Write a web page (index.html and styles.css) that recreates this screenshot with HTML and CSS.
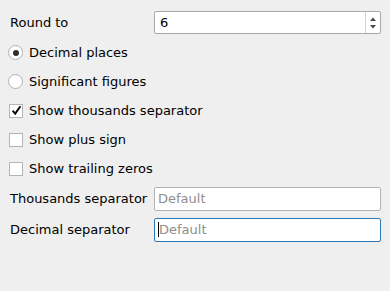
FILE: index.html
```html
<!DOCTYPE html>
<html>
<head>
<meta charset="utf-8">
<link rel="stylesheet" href="styles.css">
</head>
<body>
<div class="panel">
  <div class="row field-row first">
    <span class="label">Round to</span>
    <div class="spinbox">
      <span class="value">6</span>
      <div class="arrows">
        <svg width="14" height="22" viewBox="0 0 14 22">
          <path d="M4 9 L7 5.5 L10 9 Z" fill="#4a4a4a"/>
          <path d="M4 13 L7 16.5 L10 13 Z" fill="#4a4a4a"/>
        </svg>
      </div>
    </div>
  </div>
  <div class="row opt-row">
    <span class="radio checked"><span class="dot"></span></span>
    <span class="text">Decimal places</span>
  </div>
  <div class="row opt-row">
    <span class="radio"></span>
    <span class="text">Significant figures</span>
  </div>
  <div class="row opt-row">
    <span class="check">
      <svg width="11" height="11" viewBox="0 0 11 11"><path d="M1.6 5.6 L4.2 8.6 L9.4 1.2" fill="none" stroke="#000" stroke-width="1.9"/></svg>
    </span>
    <span class="text">Show thousands separator</span>
  </div>
  <div class="row opt-row">
    <span class="check"></span>
    <span class="text">Show plus sign</span>
  </div>
  <div class="row opt-row">
    <span class="check"></span>
    <span class="text">Show trailing zeros</span>
  </div>
  <div class="row field-row sep1">
    <span class="label">Thousands separator</span>
    <div class="lineedit"><span class="placeholder">Default</span></div>
  </div>
  <div class="row field-row sep2">
    <span class="label">Decimal separator</span>
    <div class="lineedit focused"><span class="caret"></span><span class="placeholder">Default</span></div>
  </div>
</div>
</body>
</html>
```
FILE: styles.css
```css
html, body {
  margin: 0;
  padding: 0;
  background: #efefef;
  width: 390px;
  height: 291px;
  overflow: hidden;
}
body {
  font-family: "DejaVu Sans", sans-serif;
  font-size: 13px;
  color: #000;
}
.panel {
  display: flex;
  flex-direction: column;
  padding: 11px 9px 0 0;
}
.row {
  display: flex;
  align-items: center;
}
.field-row {
  height: 23px;
}
.field-row .label {
  width: 144px;
  padding-left: 10px;
  flex: none;
}
.first {
  margin-bottom: 4px;
}
.spinbox {
  flex: 1;
  height: 21px;
  border: 1px solid #a9a9a9;
  border-radius: 2px;
  background: #fff;
  display: flex;
  align-items: center;
}
.spinbox .value {
  flex: 1;
  padding-left: 5px;
}
.arrows {
  width: 14px;
  height: 21px;
  border-left: 1px solid #d4d4d4;
  display: flex;
}
.opt-row {
  height: 29px;
  padding-left: 8px;
}
.opt-row .text {
  margin-left: 6px;
}
.radio {
  width: 13px;
  height: 13px;
  border: 1px solid #b0b0b0;
  border-radius: 50%;
  background: #fff;
  display: flex;
  align-items: center;
  justify-content: center;
  margin-left: 0;
  flex: none;
}
.radio .dot {
  width: 6px;
  height: 6px;
  border-radius: 50%;
  background: #2e2e2e;
}
.check {
  width: 12px;
  height: 12px;
  border: 1px solid #b4b4b4;
  background: #fff;
  margin-left: 1px;
  display: flex;
  align-items: center;
  justify-content: center;
  flex: none;
}
.opt-row .check + .text {
  margin-left: 6px;
}
.sep1 {
  margin-top: 4px;
}
.sep2 {
  margin-top: 8px;
}
.lineedit {
  flex: 1;
  height: 22px;
  border: 1px solid #b4b4b4;
  border-radius: 2px;
  background: #fff;
  display: flex;
  align-items: center;
  padding-left: 3px;
}
.lineedit.focused {
  border-color: #2f78b7;
}
.placeholder {
  color: #8e8e8e;
}
.caret {
  width: 1px;
  height: 15px;
  background: #000;
  margin-right: 0;
}
```
